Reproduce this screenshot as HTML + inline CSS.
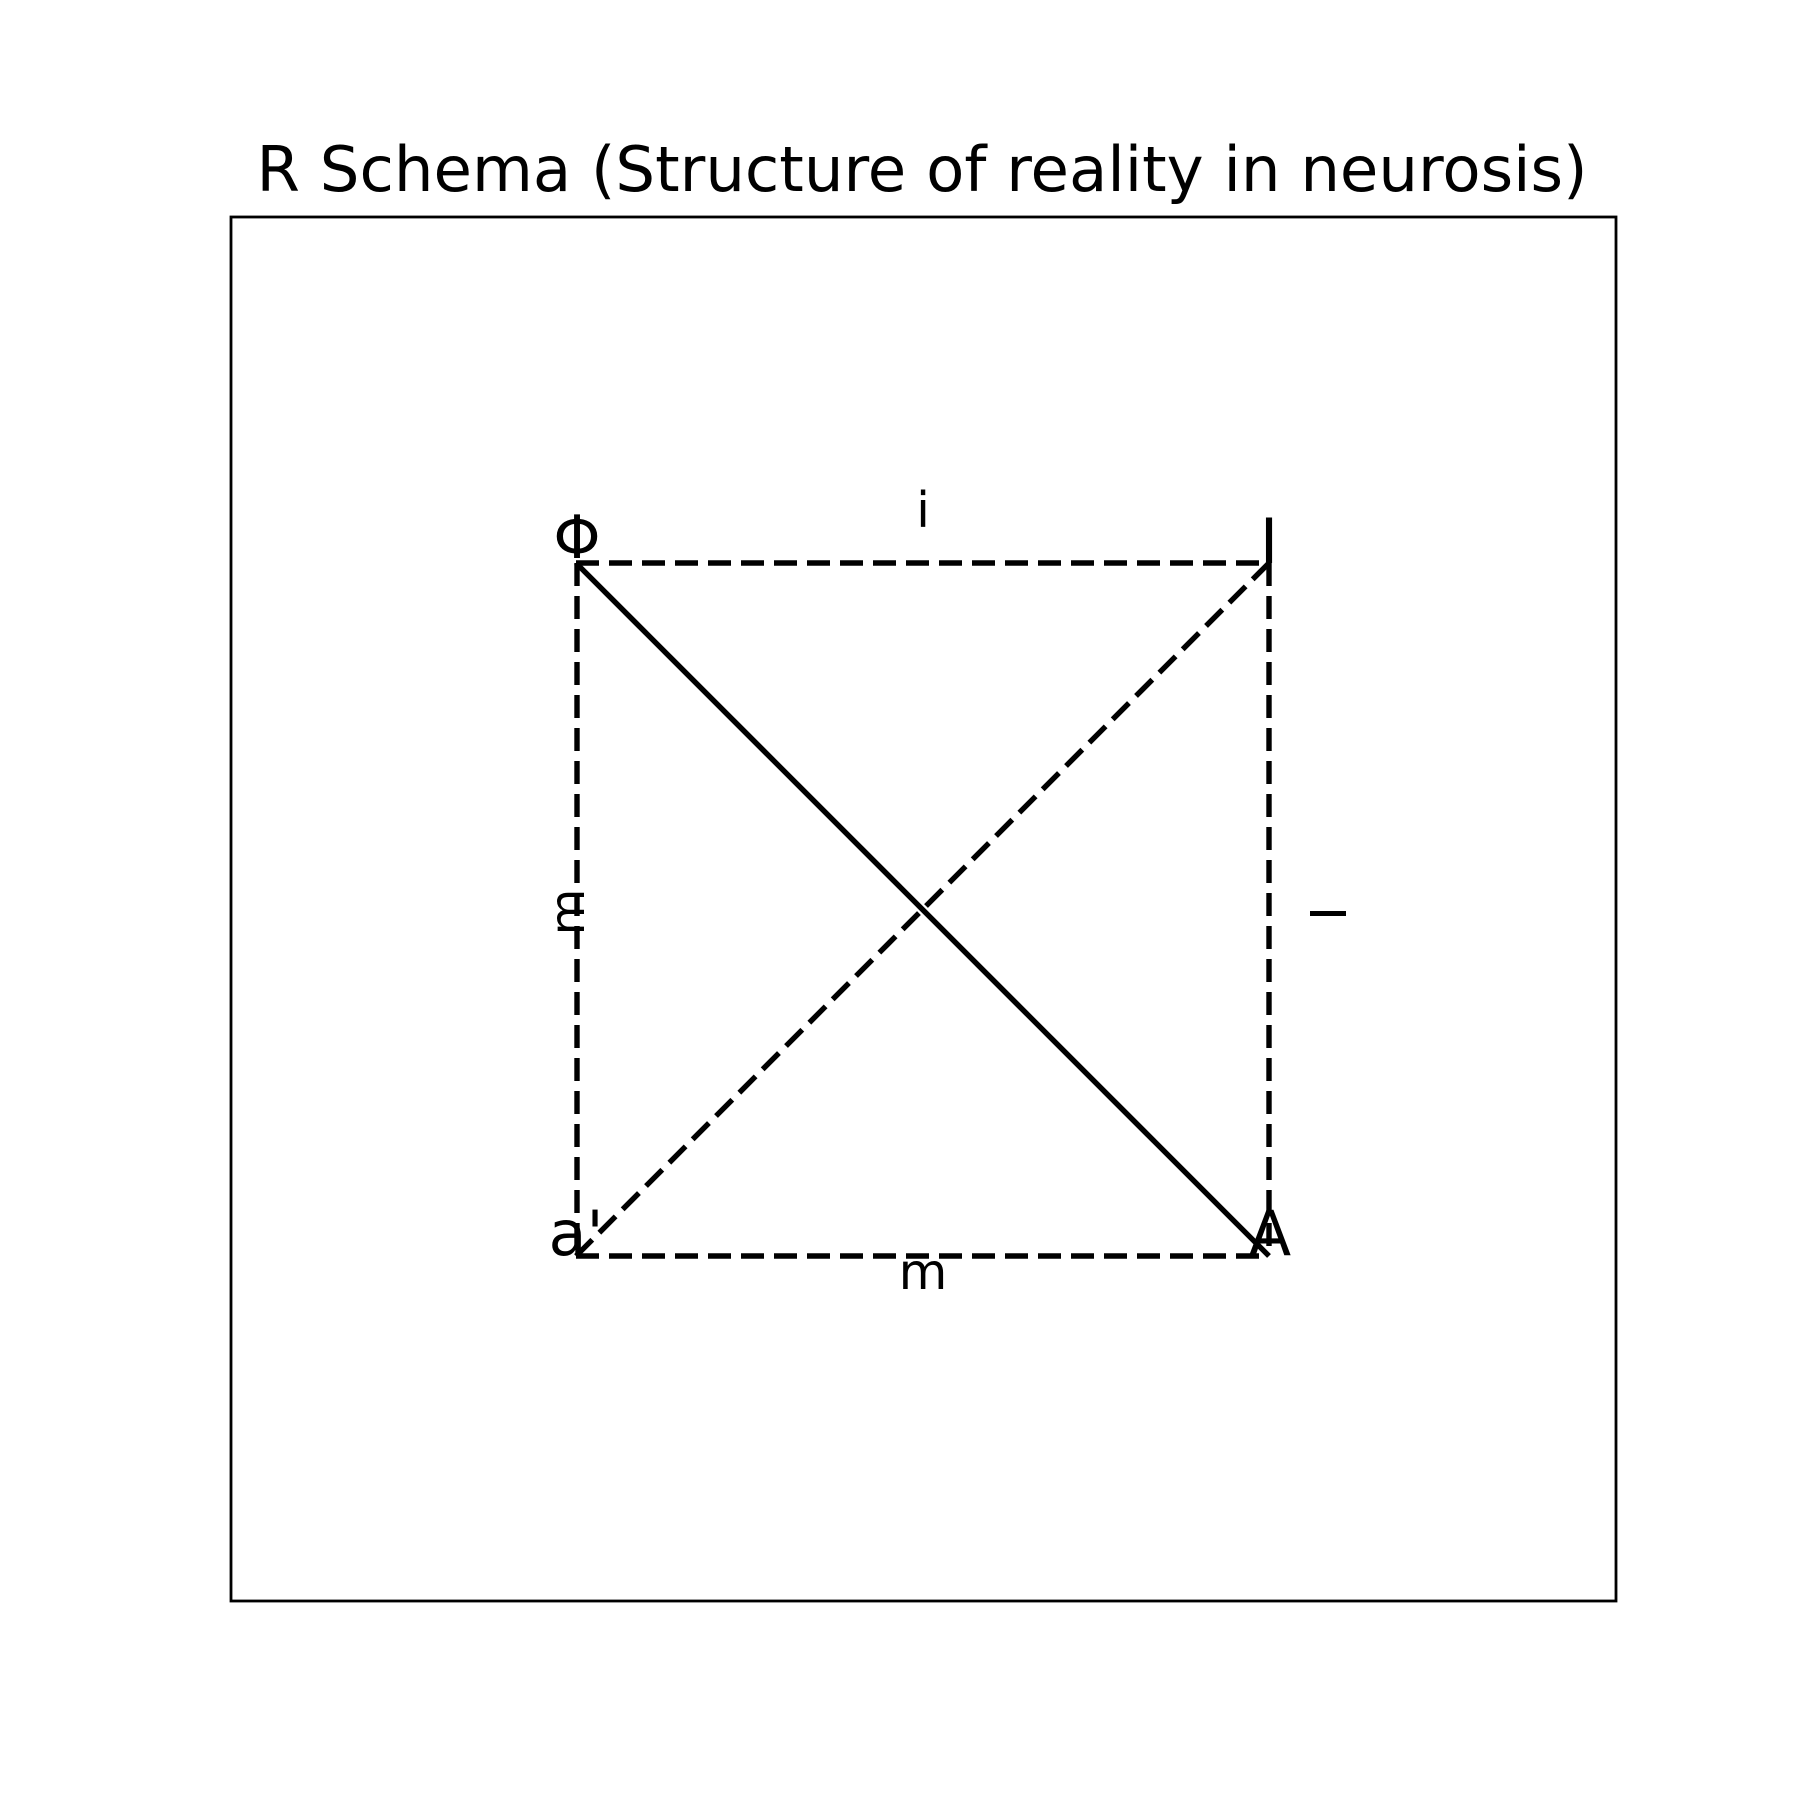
<!DOCTYPE html>
<html><head><meta charset="utf-8"><style>
html,body{margin:0;padding:0;background:#fff;}
svg{display:block;}
text{font-family:"DejaVu Sans","Liberation Sans",sans-serif;fill:#000;}
</style></head><body>
<svg width="1800" height="1800" viewBox="0 0 1800 1800" xmlns="http://www.w3.org/2000/svg">
<rect x="0" y="0" width="1800" height="1800" fill="#fff"/>
<text x="922" y="191" font-size="62" text-anchor="middle" textLength="1331" lengthAdjust="spacingAndGlyphs">R Schema (Structure of reality in neurosis)</text>
<rect x="231" y="217" width="1385" height="1384" fill="none" stroke="#000" stroke-width="2.8"/>
<g stroke="#000" stroke-width="5.4" fill="none">
<line x1="576" y1="563" x2="1269" y2="563" stroke-dasharray="23 10"/>
<line x1="576" y1="1256" x2="1269" y2="1256" stroke-dasharray="23 10"/>
<line x1="577" y1="563" x2="577" y2="1256" stroke-dasharray="23 10"/>
<line x1="1269" y1="563" x2="1269" y2="1256" stroke-dasharray="23 10"/>
<line x1="576" y1="563" x2="1269" y2="1256"/>
<line x1="576" y1="1256" x2="1269" y2="563" stroke-dasharray="23 10"/>
</g>
<text x="577" y="558" font-size="60" text-anchor="middle">Φ</text>
<text x="1269" y="563" font-size="62" text-anchor="middle">I</text>
<text x="576" y="1255" font-size="62" text-anchor="middle">a'</text>
<text x="1270" y="1255" font-size="62" text-anchor="middle">A</text>
<text x="923" y="527" font-size="49" text-anchor="middle">i</text>
<text x="923" y="1289" font-size="50" text-anchor="middle">m</text>
<text x="0" y="0" font-size="48" text-anchor="middle" transform="translate(584,912) rotate(-90)">m</text>
<rect x="1310" y="911" width="36" height="5" fill="#000"/>
</svg>
</body></html>
